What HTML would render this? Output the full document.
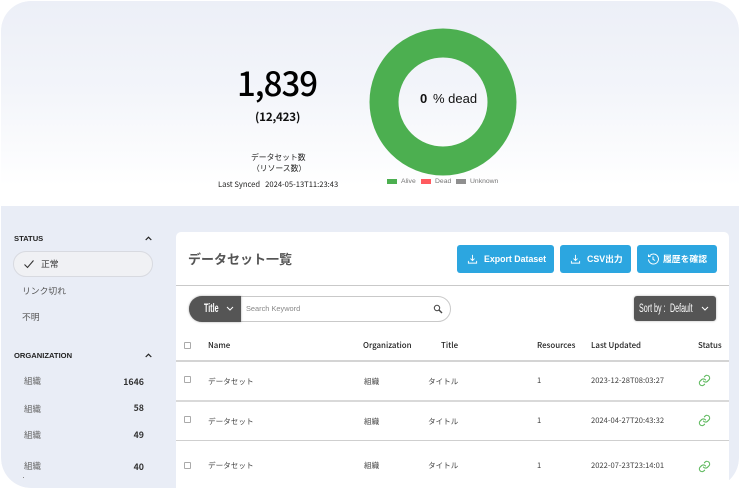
<!DOCTYPE html>
<html lang="ja"><head><meta charset="utf-8"><title>データセット一覧</title>
<style>
*{box-sizing:border-box;margin:0;padding:0}
html,body{width:740px;height:489px;overflow:hidden;background:#fff}
body{position:relative;font-family:"Noto Sans CJK JP","Liberation Sans",sans-serif;color:#222}
.a{position:absolute;white-space:nowrap;line-height:1}
#frame{position:absolute;left:1px;top:1px;width:738px;height:487px;border-radius:30px;overflow:hidden;background:#e9edf6}
#hero{position:absolute;left:0;top:0;width:738px;height:205px;background:linear-gradient(#eceff7 0,#f3f5fa 90px,#fff 185px)}
.en{font-family:"Liberation Sans","Noto Sans CJK JP",sans-serif}
.btn{position:absolute;top:245px;height:28px;background:#2ca6e0;border-radius:3px;color:#fff;font:bold 8.8px "Liberation Sans","Noto Sans CJK JP",sans-serif}
.btn span{position:absolute;top:9px;white-space:nowrap;line-height:10px}
.btn svg{position:absolute;left:10px;top:8px}
.hr{position:absolute;background:#cfcfcf;height:1px}
.th{font-size:7.9px;font-weight:500;color:#222}
.td{font-size:7.6px;color:#444}
.org{font-size:8.5px;color:#666}
.cnt{font-size:8.8px;font-weight:700;color:#333;text-align:right;width:40px}
.cb{position:absolute;left:184px;width:7px;height:7px;border:1px solid #aaa;border-radius:1px;background:#fff}
.cond{display:inline-block;transform:scaleX(.62);transform-origin:0 50%;font-family:"Liberation Sans",sans-serif}
</style></head><body>
<svg width="0" height="0" style="position:absolute"><defs><g id="lk"><path d="M10 13a5 5 0 0 0 7.5.5l3-3a5 5 0 0 0-7-7l-1.7 1.7"/><path d="M14 11a5 5 0 0 0-7.5-.5l-3 3a5 5 0 0 0 7 7l1.7-1.7"/></g></defs></svg>
<div id="frame"></div>
<div id="hero" style="left:1px;top:1px;border-radius:30px 30px 0 0"></div>

<div class="a" style="left:237px;top:66px;font-size:33px;font-weight:500;color:#000;letter-spacing:-1px">1,839</div>
<div class="a" style="left:255px;top:112px;font-size:11.6px;font-weight:700;color:#111;letter-spacing:-.2px">(12,423)</div>
<div class="a" style="left:251px;top:154px;font-size:7.8px;color:#222">データセット数</div>
<div class="a" style="left:252px;top:165px;font-size:7.8px;color:#222">（リソース数）</div>
<div class="a" style="left:218px;top:181px;font-size:7.6px;color:#222">Last Synced &nbsp; 2024-05-13T11:23:43</div>

<svg class="a" style="left:369px;top:28px" width="148" height="148" viewBox="0 0 148 148"><circle cx="74" cy="74" r="59" fill="none" stroke="#4caf50" stroke-width="29"/></svg>
<div class="a en" style="left:420px;top:92px;font-size:13px;color:#111"><b>0</b></div>
<div class="a en" style="left:433px;top:92px;font-size:13px;color:#111">% dead</div>

<div class="a" style="left:387px;top:179px;width:10px;height:5px;background:#4caf50"></div>
<div class="a en" style="left:401px;top:179px;font-size:6.8px;color:#777">Alive</div>
<div class="a" style="left:421px;top:179px;width:10px;height:5px;background:#ff5a5f"></div>
<div class="a en" style="left:435px;top:179px;font-size:6.8px;color:#777">Dead</div>
<div class="a" style="left:456px;top:179px;width:10px;height:5px;background:#8f8f8f"></div>
<div class="a en" style="left:470px;top:179px;font-size:6.8px;color:#777">Unknown</div>

<!-- sidebar -->
<div class="a en" style="left:14px;top:235px;font-size:7.6px;font-weight:700;color:#222">STATUS</div>
<svg class="a" style="left:145px;top:236px" width="7" height="5" viewBox="0 0 7 5"><path d="M.7 4L3.5 1.2L6.3 4" fill="none" stroke="#222" stroke-width="1.2"/></svg>
<div class="a" style="left:13px;top:251px;width:140px;height:26px;border-radius:13px;background:#f0f1f4;border:1px solid #d8dae0"></div>
<svg class="a" style="left:23px;top:259px" width="12" height="10" viewBox="0 0 12 10"><path d="M1.5 5.5L4.5 8.5L10.5 1.5" fill="none" stroke="#333" stroke-width="1.1"/></svg>
<div class="a" style="left:41px;top:260px;font-size:8.8px;color:#333">正常</div>
<div class="a" style="left:22px;top:287px;font-size:8.8px;color:#555">リンク切れ</div>
<div class="a" style="left:22px;top:313px;font-size:8.8px;color:#555">不明</div>
<div class="a en" style="left:14px;top:352px;font-size:7.6px;font-weight:700;color:#222">ORGANIZATION</div>
<svg class="a" style="left:145px;top:353px" width="7" height="5" viewBox="0 0 7 5"><path d="M.7 4L3.5 1.2L6.3 4" fill="none" stroke="#222" stroke-width="1.2"/></svg>
<div class="a org" style="left:24px;top:377px">組織</div><div class="a cnt" style="left:104px;top:378px">1646</div>
<div class="a org" style="left:24px;top:405px">組織</div><div class="a cnt" style="left:104px;top:404px">58</div>
<div class="a org" style="left:24px;top:431px">組織</div><div class="a cnt" style="left:104px;top:431px">49</div>
<div class="a org" style="left:24px;top:462px">組織</div><div class="a cnt" style="left:104px;top:463px">40</div>
<div class="a" style="left:23px;top:477px;width:1px;height:1px;background:#888"></div>

<!-- main panel -->
<div class="a" style="left:176px;top:232px;width:553px;height:257px;background:#fff;border-radius:5px 5px 0 0"></div>
<div class="a" style="left:188px;top:252px;font-size:13px;font-weight:700;color:#555">データセット一覧</div>

<div class="btn" style="left:457px;width:97px"><svg width="11" height="12" viewBox="0 0 12 12" fill="none" stroke="#fff" stroke-width="1"><path d="M6 1.5V7.5M3.8 5.5L6 7.7L8.2 5.5M1.5 8V10.5H10.5V8"/></svg><span style="left:27px">Export Dataset</span></div>
<div class="btn" style="left:560px;width:71px"><svg width="11" height="12" viewBox="0 0 12 12" fill="none" stroke="#fff" stroke-width="1"><path d="M6 1.5V7.5M3.8 5.5L6 7.7L8.2 5.5M1.5 8V10.5H10.5V8"/></svg><span style="left:27px">CSV出力</span></div>
<div class="btn" style="left:637px;width:80px"><svg width="12" height="12" viewBox="0 0 12 12" fill="none" stroke="#fff" stroke-width="1"><path d="M2.5 3A5 5 0 1 1 1.5 6.5M1.5 1.5V3.5H3.5M6 3.5V6.3L8 7.5"/></svg><span style="left:26px">履歴を確認</span></div>

<div class="hr" style="left:176px;top:285px;width:553px;height:1px;background:#c9c9c9"></div>

<div class="a" style="left:189px;top:296px;width:262px;height:26px;border-radius:13px;background:#fff;border:1px solid #c9c9c9"></div>
<div class="a" style="left:189px;top:296px;width:52px;height:26px;border-radius:13px 0 0 13px;background:#555;box-shadow:0 0 2px rgba(0,0,0,.35)"></div>
<div class="a" style="left:204px;top:303px;font-size:11.5px;font-weight:700;color:#fff"><span class="cond">Title</span></div>
<svg class="a" style="left:226px;top:306px" width="8" height="5" viewBox="0 0 8 5"><path d="M1 1L4 4L7 1" fill="none" stroke="#fff" stroke-width="1"/></svg>
<div class="a en" style="left:246px;top:305px;font-size:7.4px;color:#888">Search Keyword</div>
<svg class="a" style="left:433px;top:304px" width="10" height="10" viewBox="0 0 10 10" fill="none" stroke="#444" stroke-width="1"><circle cx="4" cy="4" r="2.7"/><path d="M6 6L9 9" stroke-width="1.4"/></svg>

<div class="a" style="left:634px;top:296px;width:82px;height:25px;border-radius:3px;background:#555;box-shadow:0 0 2px rgba(0,0,0,.3)"></div>
<div class="a" style="left:639px;top:303px;font-size:11.5px;color:#fff"><span class="cond">Sort by :</span></div>
<div class="a" style="left:670px;top:303px;font-size:11.5px;color:#fff"><span class="cond">Default</span></div>
<svg class="a" style="left:701px;top:306px" width="8" height="5" viewBox="0 0 8 5"><path d="M1 1L4 4L7 1" fill="none" stroke="#fff" stroke-width="1"/></svg>

<!-- table -->
<div class="cb" style="top:342px"></div>
<div class="a th" style="left:208px;top:342px">Name</div>
<div class="a th" style="left:363px;top:342px">Organization</div>
<div class="a th" style="left:441px;top:342px">Title</div>
<div class="a th" style="left:537px;top:342px">Resources</div>
<div class="a th" style="left:591px;top:342px">Last Updated</div>
<div class="a th" style="left:698px;top:342px">Status</div>
<div class="hr" style="left:176px;top:360px;width:553px;height:2px;background:#d4d4d4"></div>

<div class="cb" style="top:376px"></div>
<div class="a td" style="left:208px;top:378px">データセット</div>
<div class="a td" style="left:364px;top:378px">組織</div>
<div class="a td" style="left:428px;top:378px">タイトル</div>
<div class="a td" style="left:537px;top:377px">1</div>
<div class="a td" style="left:591px;top:377px">2023-12-28T08:03:27</div>
<svg class="a" style="left:698px;top:374px" width="13" height="13" viewBox="0 0 24 24" fill="none" stroke="#5cb85c" stroke-width="2" stroke-linecap="round"><use href="#lk"/></svg>
<div class="hr" style="left:176px;top:400px;width:553px;height:2px;background:#d9d9d9"></div>

<div class="cb" style="top:416px"></div>
<div class="a td" style="left:208px;top:418px">データセット</div>
<div class="a td" style="left:364px;top:418px">組織</div>
<div class="a td" style="left:428px;top:418px">タイトル</div>
<div class="a td" style="left:537px;top:417px">1</div>
<div class="a td" style="left:591px;top:417px">2024-04-27T20:43:32</div>
<svg class="a" style="left:698px;top:414px" width="13" height="13" viewBox="0 0 24 24" fill="none" stroke="#5cb85c" stroke-width="2" stroke-linecap="round"><use href="#lk"/></svg>
<div class="hr" style="left:176px;top:440px;width:553px;height:1px;background:#cfcfcf"></div>

<div class="cb" style="top:462px"></div>
<div class="a td" style="left:208px;top:462px">データセット</div>
<div class="a td" style="left:364px;top:462px">組織</div>
<div class="a td" style="left:428px;top:462px">タイトル</div>
<div class="a td" style="left:537px;top:462px">1</div>
<div class="a td" style="left:591px;top:462px">2022-07-23T23:14:01</div>
<svg class="a" style="left:698px;top:460px" width="13" height="13" viewBox="0 0 24 24" fill="none" stroke="#5cb85c" stroke-width="2" stroke-linecap="round"><use href="#lk"/></svg>

<!-- outer corner masks -->
<svg class="a" style="left:0;top:0" width="740" height="489" viewBox="0 0 740 489"><path fill="#fff" fill-rule="evenodd" d="M0 0H740V489H0ZM31 1H709A30 30 0 0 1 739 31V458A30 30 0 0 1 709 488H31A30 30 0 0 1 1 458V31A30 30 0 0 1 31 1Z"/></svg>
</body></html>
